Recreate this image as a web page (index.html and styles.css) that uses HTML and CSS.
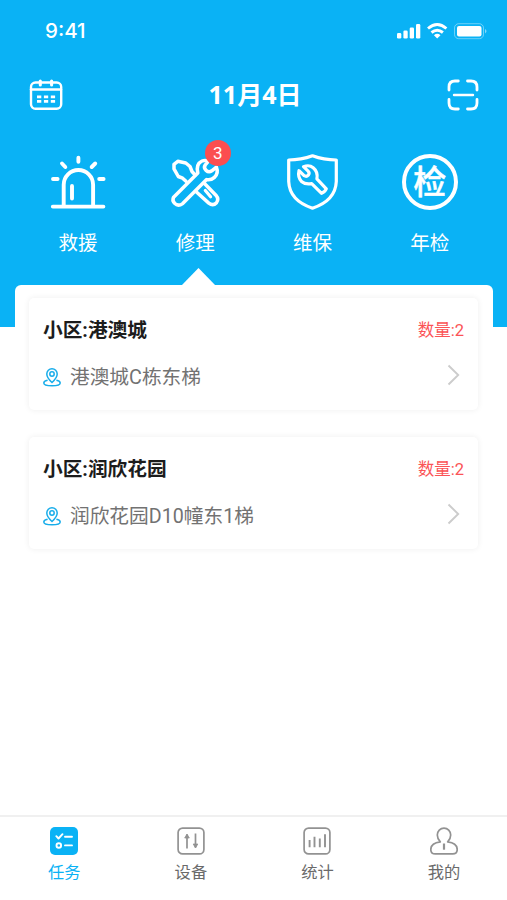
FILE: index.html
```html
<!DOCTYPE html>
<html lang="zh-CN">
<head>
<meta charset="utf-8">
<title>任务</title>
<link rel="stylesheet" href="styles.css">
</head>
<body>
<div class="app">
  <header class="hero">
    <div class="status">
      <span class="time">9:41</span>
      <svg class="status-icons" width="92" height="20" viewBox="0 0 92 20">
        <g fill="#fff">
          <rect x="1" y="12" width="4.300" height="5.500" rx="1.300"/><rect x="7.400" y="9.500" width="4.300" height="8" rx="1.300"/><rect x="13.700" y="6.500" width="4.300" height="11" rx="1.300"/><rect x="20" y="3" width="4.300" height="14.500" rx="1.300"/>
          <path d="M41.200 17.500l-3.300-3.300q3.300-2.700 6.600 0z"/>
          <rect x="61" y="5" width="24.500" height="10.500" rx="2"/>
          <path d="M89 8v4.400q3-2.200 0-4.400z" opacity=".5"/>
        </g>
        <g fill="none" stroke="#fff" stroke-width="2.900">
          <path d="M32 7.500q9.200-7.800 18.400 0"/><path d="M35.500 11.500q5.700-4.600 11.400 0"/>
        </g>
        <rect x="58.500" y="2.700" width="29" height="15" rx="4.200" fill="none" stroke="#fff" opacity=".4"/>
      </svg>
    </div>
    <div class="titlebar">
      <svg width="34" height="32" viewBox="0 0 34 32" fill="none" stroke="#fff" stroke-width="2.400" stroke-linecap="round">
        <rect x="2" y="3.500" width="30.200" height="26.300" rx="4.500"/>
        <path d="M2 10.500h30"/><path d="M11.300 2v4M22.600 2v4" stroke-width="3.100"/>
        <path d="M8 17.800h4.300M14.900 17.800h4.300M21.800 17.800h4.300M8 22.300h4.300M14.900 22.300h4.300M21.800 22.300h4.300" stroke-width="2.700" stroke-linecap="butt"/>
      </svg>
      <h1>11月4日</h1>
      <svg width="32" height="32" viewBox="0 0 32 32" fill="none" stroke="#fff" stroke-width="2.800" stroke-linecap="round">
        <path d="M2 11V8q0-6 6-6h3.300M20.500 2H24q6 0 6 6v3M30 20.500V24q0 6-6 6h-3.500M11.300 30H8q-6 0-6-6v-3.500"/><path d="M7 16h19" stroke-width="2.400"/>
      </svg>
    </div>
    <nav class="categories">
      <div class="category">
        <svg width="56" height="56" viewBox="0 0 56 56" fill="none" stroke="#fff" stroke-width="3.900" stroke-linecap="round">
          <path d="M2.800 52.600h50.600M13.700 52V30.700a14.700 14.700 0 0 1 29.400 0V52M22 32v12.500M28.400 3.800v3.900M12 9.500l3.300 3.500M45.200 9.500L41.700 13M3 25h4.600M49.200 25h4.400"/>
        </svg>
        <span>救援</span>
      </div>
      <div class="category">
        <svg width="56" height="56" viewBox="0 0 56 56" fill="none" stroke="#fff" stroke-width="3.500" stroke-linecap="round" stroke-linejoin="round">
          <path d="M19 27.300L15.600 24.200l-4.300-1.700-4.300-7.700V10.300L10.800 7.300l8 1.700 4.200 3.500 2 5 3.200 3.500"/>
          <path d="M6.600 43.200L30.800 19Q28.700 10 35 7q3.200-1.300 6.500.2l-3.200 3.600q-2 3 .8 5.600 2.700 2.500 5.700.4l4.600-3.600q2.500 6-2 10.200-3.200 3-7.800 2.200L15.700 49.600q-4.700 3.200-8-.2-2.900-2.900-1.100-6.200z"/>
          <path d="M37 29l11.900 12.200q3.400 4 .6 7.500-3.500 3.700-7.700.4L28.900 37.500"/>
          <path d="M38.300 36.500l5.300 6.200" stroke-width="3.200"/>
        </svg>
        <b class="badge">3</b>
        <span>修理</span>
      </div>
      <div class="category">
        <svg width="56" height="56" viewBox="-.5 0 56 56" fill="none" stroke="#fff" stroke-width="3.200" stroke-linejoin="round">
          <path d="M28 1.800Q39.500 6 51.800 6v21.500Q51 46.500 28 54.200 5 46.500 4.200 27.500V6Q16.500 6 28 1.800z"/>
          <path d="M19 12.700q5.700-2.300 9.700 1 5 4 3.700 11.200l9.400 9.900q-1.200 3.200-4.700 4.500l-9.900-9.700q-6.400 1.200-10.200-2.100-4-4.300-2.500-10.800l5.100 5q2.500 1.300 4.200-.5 1.700-2-.2-4z"/>
        </svg>
        <span>维保</span>
      </div>
      <div class="category">
        <div class="seal">检</div>
        <span>年检</span>
      </div>
    </nav>
  </header>
  <main class="panel">
    <article class="card">
      <div class="row"><h2>小区:港澳城</h2><em>数量:2</em></div>
      <div class="row">
        <p><svg class="pin" width="18" height="19" viewBox="0 0 18 19"><use href="#pin"/></svg>港澳城C栋东梯</p>
        <svg class="arrow" width="14" height="22" viewBox="0 0 14 22"><path d="M1.500 1.500L11.200 11l-9.700 9.500"/></svg>
      </div>
    </article>
    <article class="card">
      <div class="row"><h2>小区:润欣花园</h2><em>数量:2</em></div>
      <div class="row">
        <p><svg class="pin" width="18" height="19" viewBox="0 0 18 19"><use href="#pin"/></svg>润欣花园D10幢东1梯</p>
        <svg class="arrow" width="14" height="22" viewBox="0 0 14 22"><path d="M1.500 1.500L11.200 11l-9.700 9.500"/></svg>
      </div>
    </article>
  </main>
  <nav class="tabs">
    <div class="tab active">
      <svg width="28" height="28" viewBox="0 0 28 28" fill="none" stroke="#fff" stroke-width="1.900" stroke-linecap="round" stroke-linejoin="round">
        <rect width="28" height="28" rx="5" fill="#0ab2f5" stroke="none"/>
        <path d="M6.300 9.200l2.200 2.300 4-4.300M15 9.700h7M15 18.400h7"/><circle cx="8.800" cy="18.500" r="2.300"/>
      </svg>
      <span>任务</span>
    </div>
    <div class="tab">
      <svg width="28" height="28" viewBox="0 0 28 28" fill="none" stroke="#929292" stroke-width="1.700">
        <rect x="1.100" y="1.100" width="25.800" height="25.800" rx="4.500"/>
        <path d="M10 21.500V7.500M18.500 6.500v14"/><path d="M10 7l2.300 4H7.700zM18.500 21l-2.300-4h4.600z" fill="#929292" stroke-width=".8"/>
      </svg>
      <span>设备</span>
    </div>
    <div class="tab">
      <svg width="28" height="28" viewBox="0 0 28 28" fill="none" stroke="#929292" stroke-width="1.700">
        <rect x="1.100" y="1.100" width="25.800" height="25.800" rx="4.500"/>
        <path d="M6.600 13v7.200M11.500 9.700v10.500M16.800 11.500v8.700M22 7.200v13" stroke-width="1.900"/>
      </svg>
      <span>统计</span>
    </div>
    <div class="tab">
      <svg width="28" height="28" viewBox="0 0 28 28" fill="none" stroke="#929292" stroke-width="1.700" stroke-linejoin="round">
        <path d="M10.300 14.900Q7.300 11.700 7.300 8a6.700 6.900 0 0 1 13.400 0q0 3.700-3 6.900 9.500 1.300 9.500 7.600 0 4.400-4.400 4.400H5.200q-4.400 0-4.400-4.400 0-6.300 9.500-7.600z"/>
        <path d="M14 16.500v6.200" stroke-width="2.200"/>
      </svg>
      <span>我的</span>
    </div>
  </nav>
</div>
<svg width="0" height="0" class="defs">
  <defs>
    <g id="pin" fill="none" stroke="#18adea" stroke-width="1.500">
      <path d="M9 14.500Q3.800 9.600 3.800 6a5.200 5.200 0 0 1 10.400 0q0 3.600-5.200 8.500z"/>
      <circle cx="9" cy="6" r="2.200"/>
      <path d="M4.600 12.200Q.8 13 .8 14.900.8 17.700 9 17.700t8.200-2.800q0-1.900-3.800-2.700"/>
    </g>
  </defs>
</svg>
</body>
</html>
```
FILE: styles.css
```css
* { box-sizing: border-box; margin: 0; padding: 0; }
body {
  width: 507px;
  height: 900px;
  overflow: hidden;
  background: #fff;
  font-family: Roboto, "Noto Sans CJK SC", sans-serif;
}
svg { display: block; flex: none; }
.defs { position: absolute; }
.app { height: 900px; display: flex; flex-direction: column; }

.hero { height: 327px; flex: none; background: #0ab2f5; color: #fff; }
.status {
  height: 62px;
  padding: 0 19px 0 45px;
  display: flex;
  align-items: center;
  justify-content: space-between;
}
.time { font: 500 20.500px/24px Inter, sans-serif; }
.titlebar {
  height: 66px;
  padding: 0 28px 0 29px;
  display: flex;
  align-items: center;
  justify-content: space-between;
}
.titlebar h1 {
  padding-bottom: 3px;
  font: 700 25px/36px "Noto Sans", "Noto Sans CJK SC", sans-serif;
}
.categories {
  margin: 26px 0 0 19.500px;
  display: grid;
  grid-template-columns: repeat(4, 117.200px);
}
.category {
  position: relative;
  display: flex;
  flex-direction: column;
  align-items: center;
  gap: 18.500px;
  font-size: 19.500px;
  line-height: 30px;
}
.badge {
  position: absolute;
  left: 68px;
  top: -14px;
  width: 26px;
  height: 26px;
  border-radius: 50%;
  background: #fb4e50;
  font-size: 17px;
  font-weight: 400;
  line-height: 26px;
  text-align: center;
}
.seal {
  width: 56px;
  height: 56px;
  border: 4px solid #fff;
  border-radius: 50%;
  font-size: 33px;
  font-weight: 500;
  line-height: 50px;
  text-align: center;
  -webkit-text-stroke: .5px #fff;
}

.panel {
  position: relative;
  flex: 1;
  margin: -42px 14px 0 15px;
  padding: 13px 15px 0 14px;
  border-radius: 6px 6px 0 0;
  background: #fff;
  display: flex;
  flex-direction: column;
  gap: 27px;
}
.panel::before {
  content: "";
  position: absolute;
  left: 166px;
  top: -17px;
  width: 35px;
  height: 18px;
  background: #fff;
  clip-path: polygon(50% 0, 100% 100%, 0 100%);
}
.card {
  height: 112px;
  padding: 16px 14px 0 14px;
  border-radius: 5px;
  background: #fff;
  box-shadow: 0 0 6px rgba(0, 0, 0, .07);
  display: flex;
  flex-direction: column;
  gap: 16px;
}
.row { height: 32px; display: flex; align-items: center; justify-content: space-between; }
.row h2 { padding-top: 1px; color: #1c1c1c; font-size: 19.700px; font-weight: 700; line-height: 32px; }
.row em { padding-bottom: 3px; color: #fb5356; font-size: 16.500px; font-style: normal; }
.row p { display: flex; align-items: center; gap: 9px; color: #727272; font-size: 19.700px; line-height: 32px; }
.arrow { margin: 0 3px 6px 0; fill: none; stroke: #ccc; stroke-width: 1.900; }
.pin { margin-bottom: 2px; }

.tabs {
  height: 85px;
  flex: none;
  padding: 10px 0 0 1px;
  border-top: 2px solid #f0f0f0;
  display: grid;
  grid-template-columns: repeat(4, 126.600px);
}
.tab {
  display: flex;
  flex-direction: column;
  align-items: center;
  gap: 5px;
  color: #6a6a6a;
  font-size: 16.300px;
  line-height: 26px;
}
.active { color: #0ab2f5; }
```
